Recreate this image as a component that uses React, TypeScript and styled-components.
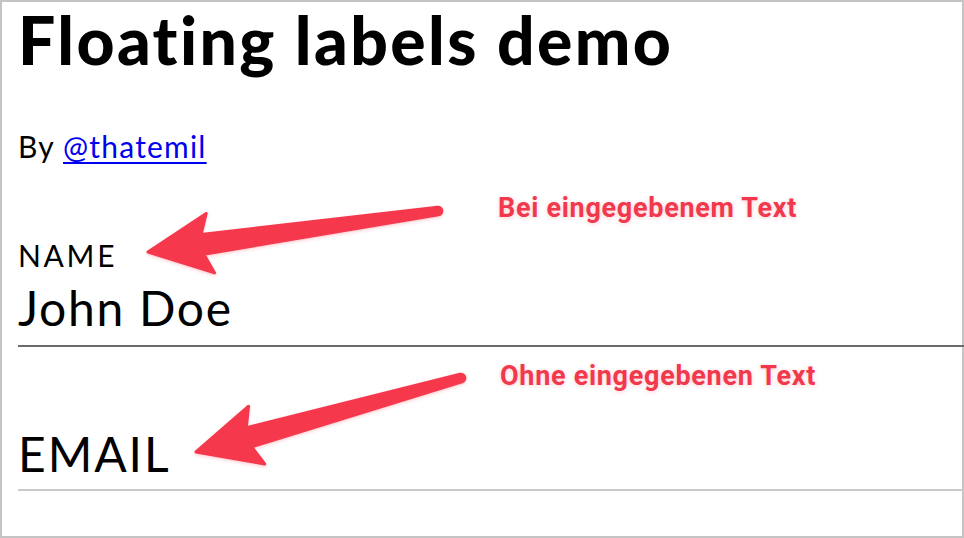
import styled, { createGlobalStyle } from "styled-components";

const GlobalStyle = createGlobalStyle`
  html, body {
    margin: 0;
    padding: 0;
    background: #ffffff;
  }
  body {
    font-family: Lato, "Noto Sans", sans-serif;
    color: #000;
  }
`;

type Pt = [number, number];

// tapered arrow like a screenshot annotation tool draws it
const arrowPath = (tip: Pt, tail: Pt) => {
  const dx = tail[0] - tip[0];
  const dy = tail[1] - tip[1];
  const len = Math.hypot(dx, dy);
  const ux = dx / len;
  const uy = dy / len;
  const nx = -uy;
  const ny = ux;
  const p = (a: number, c: number) =>
    `${(tip[0] + ux * a + nx * c).toFixed(1)} ${(tip[1] + uy * a + ny * c).toFixed(1)}`;
  const tailHalf = 3.8;
  return [
    `M ${p(0, 0)}`,
    `L ${p(63, 30)}`,
    `L ${p(55, 10)}`,
    `L ${p(len, tailHalf)}`,
    `A ${tailHalf} ${tailHalf} 0 0 0 ${p(len, -tailHalf)}`,
    `L ${p(55, -10)}`,
    `L ${p(63, -30)}`,
    "Z",
  ].join(" ");
};

const annotations: { tip: Pt; tail: Pt; text: string; x: number; y: number }[] = [
  { tip: [148, 252], tail: [438, 211], text: "Bei eingegebenem Text", x: 498, y: 194 },
  { tip: [196, 452], tail: [461, 378], text: "Ohne eingegebenen Text", x: 500, y: 362 },
];

const App = () => {
  return (
    <Page>
      <GlobalStyle />
      <Frame>
        <Title>Floating labels demo</Title>
        <Byline>
          By <a href="#">@thatemil</a>
        </Byline>
        <Form>
          <Field $filled>
            <Label $floated>Name</Label>
            <Value>John Doe</Value>
          </Field>
          <Field>
            <Spacer />
            <Label>Email</Label>
          </Field>
        </Form>
      </Frame>

      <Overlay>
        <svg width="964" height="538" viewBox="0 0 964 538">
          <defs>
            <filter id="shadow" x="-20%" y="-20%" width="140%" height="140%">
              <feDropShadow dx="0" dy="1.5" stdDeviation="1.5" floodColor="#f5374b" floodOpacity="0.25" />
            </filter>
          </defs>
          {annotations.map((a) => (
            <path
              key={a.text}
              d={arrowPath(a.tip, a.tail)}
              fill="#f5384c"
              stroke="#f5384c"
              strokeWidth={3}
              strokeLinejoin="round"
              filter="url(#shadow)"
            />
          ))}
        </svg>
        {annotations.map((a) => (
          <Note key={a.text} style={{ left: a.x, top: a.y }}>
            {a.text}
          </Note>
        ))}
      </Overlay>
    </Page>
  );
};

export default App;

const Page = styled.div`
  position: relative;
  width: 964px;
  height: 538px;
  overflow: hidden;
`;

const Frame = styled.div`
  box-sizing: border-box;
  width: 964px;
  height: 538px;
  border: 2px solid #c4c4c4;
  padding: 0 0 0 16px;
`;

const Title = styled.h1`
  margin: -2px 0 0;
  font-family: Lato, "Noto Sans", sans-serif;
  font-weight: 900;
  font-size: 66px;
  line-height: 1.2;
  letter-spacing: 2.4px;
`;

const Byline = styled.p`
  margin: 49px 0 0;
  font-size: 30px;
  line-height: 36px;
  letter-spacing: 1.2px;

  a {
    color: #0000ee;
    text-decoration: underline;
    text-underline-offset: 4px;
    text-decoration-thickness: 2px;
  }
`;

const Form = styled.div`
  display: flex;
  flex-direction: column;
  gap: 34px;
  margin-top: 73px;
  margin-right: -2px;
`;

const Field = styled.div<{ $filled?: boolean }>`
  display: flex;
  flex-direction: column;
  padding-bottom: 9px;
  border-bottom: 2px solid ${(p) => (p.$filled ? "#6b6b6b" : "#c9c9c9")};
`;

const Label = styled.label<{ $floated?: boolean }>`
  display: block;
  text-transform: uppercase;
  letter-spacing: ${(p) => (p.$floated ? "0.09em" : "0.04em")};
  font-size: ${(p) => (p.$floated ? "30px" : "48px")};
  line-height: ${(p) => (p.$floated ? "36px" : "56px")};
  margin-top: ${(p) => (p.$floated ? "0" : "2px")};
  margin-bottom: ${(p) => (p.$floated ? "7px" : "-2px")};
`;

const Spacer = styled.div`
  height: 43px;
`;

const Value = styled.div`
  font-size: 48px;
  line-height: 56px;
  letter-spacing: 1.7px;
`;

const Overlay = styled.div`
  position: absolute;
  inset: 0;
  pointer-events: none;

  svg {
    position: absolute;
    left: 0;
    top: 0;
  }
`;

const Note = styled.div`
  position: absolute;
  font-family: Roboto, "Liberation Sans", sans-serif;
  font-weight: 700;
  font-size: 27px;
  line-height: 28px;
  letter-spacing: 0.7px;
  color: #f2384c;
  white-space: nowrap;
  text-shadow: 0 1px 4px rgba(242, 56, 76, 0.25);
`;
